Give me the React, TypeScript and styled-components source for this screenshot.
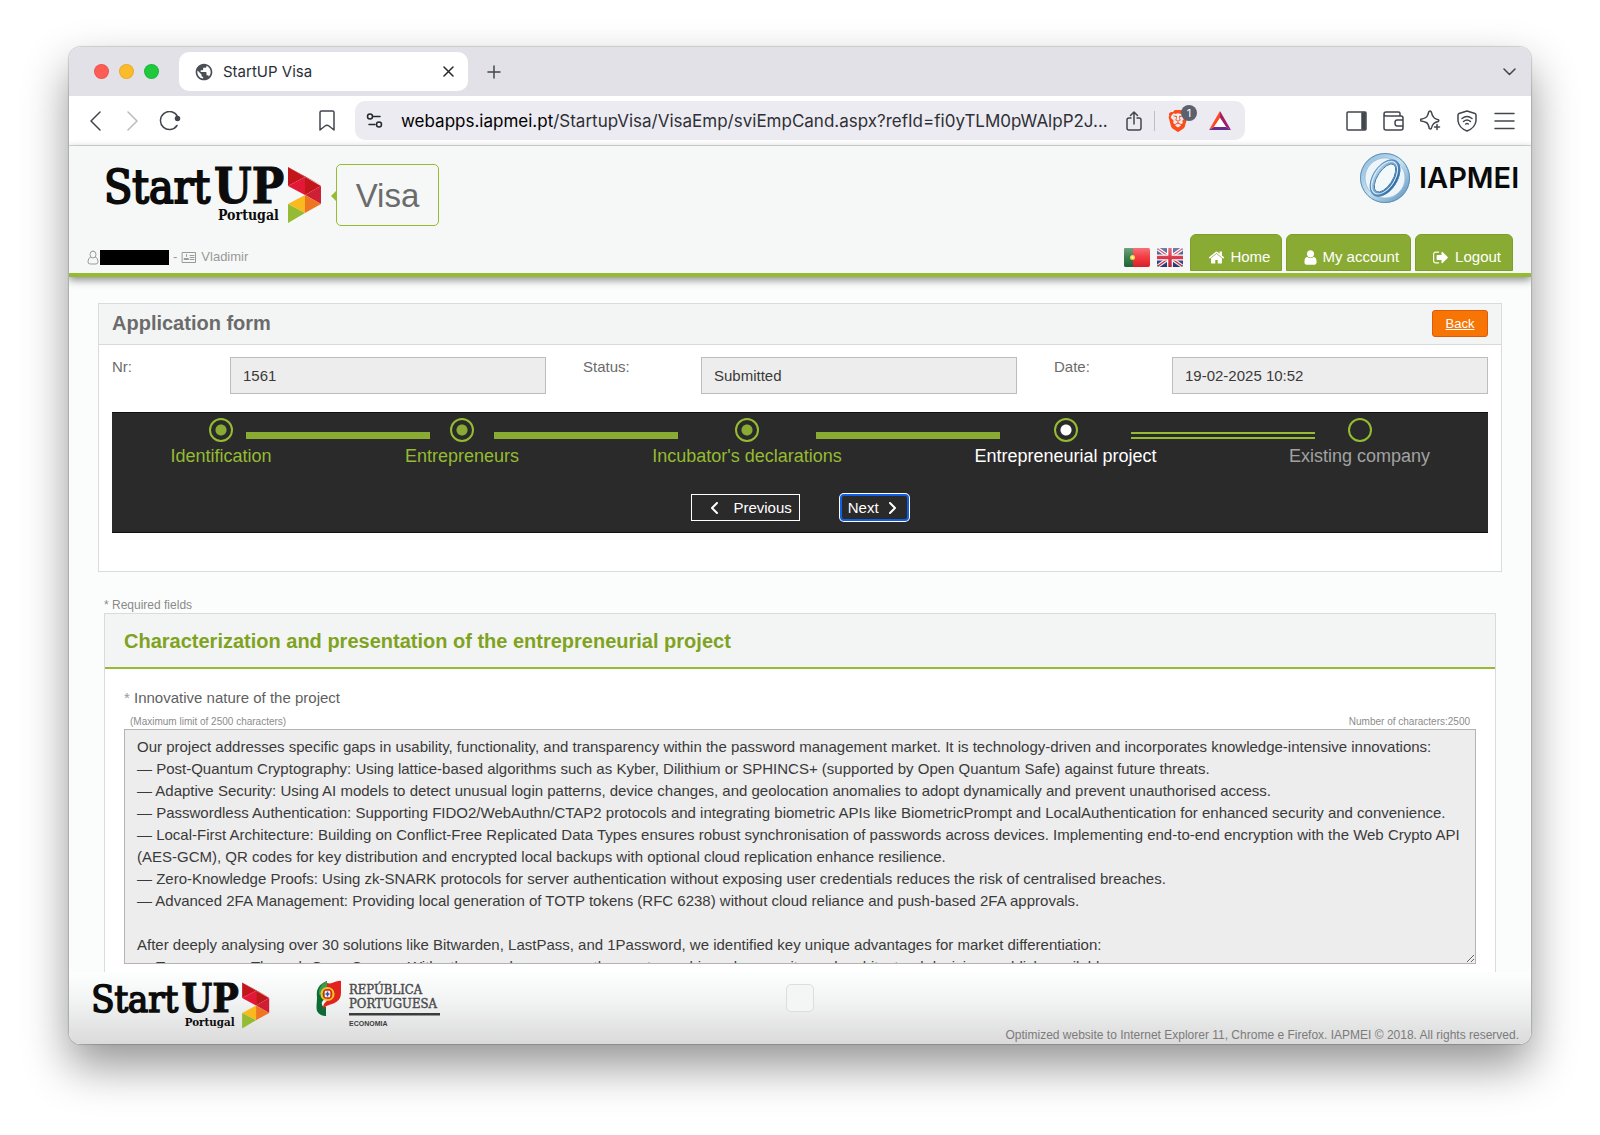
import React from 'react';
import styled, { createGlobalStyle } from 'styled-components';
import { MdPublic } from 'react-icons/md';
import { SiBrave } from 'react-icons/si';

const sans = '"Liberation Sans", Arial, sans-serif';
const ui = 'Inter, Roboto, sans-serif';
const slab = '"DejaVu Serif Condensed", "DejaVu Serif", serif';

const green = '#95bb32';
const leaf = '#8aab33';
const chromeInk = '#42464d';

const GlobalStyle = createGlobalStyle`
  *, *::before, *::after { box-sizing: border-box; }
  body { margin: 0; background: #fff; font-family: ${sans}; }
  button, input, textarea { font: inherit; }
`;

/* ---------- window ---------- */

const Desktop = styled.div`
  height: 100vh;
  padding: 47px 69px 91px;
  display: flex;
`;

const Window = styled.div`
  flex: 1;
  min-width: 0;
  display: flex;
  flex-direction: column;
  overflow: hidden;
  border-radius: 12px;
  background: #fff;
  box-shadow: 0 0 1px 1px rgba(0, 0, 0, 0.16), 0 22px 46px rgba(0, 0, 0, 0.42);
`;

const TabStrip = styled.div`
  height: 49px;
  flex: none;
  display: flex;
  align-items: center;
  padding: 0 15px 0 25px;
  background: #e2e1e7;
`;

const Lights = styled.div`
  display: flex;
  gap: 10px;
  margin-right: 20px;
`;

const Light = styled.span<{ $color: string }>`
  width: 15px;
  height: 15px;
  border-radius: 50%;
  background: ${(p) => p.$color};
  box-shadow: inset 0 0 0 1px rgba(0, 0, 0, 0.08);
`;

const Tab = styled.div`
  width: 289px;
  height: 39px;
  display: flex;
  align-items: center;
  padding: 0 6px 0 15px;
  border-radius: 10px;
  background: #fff;
  color: #2b2f36;
  font: 15px/20px ${ui};
  margin-right: 12px;
`;

const TabTitle = styled.span`
  flex: 1;
  margin-left: 9px;
`;

const IconButton = styled.button<{ $w?: number }>`
  width: ${(p) => p.$w ?? 28}px;
  height: 28px;
  flex: none;
  display: flex;
  align-items: center;
  justify-content: center;
  padding: 0;
  border: 0;
  background: none;
  color: ${chromeInk};
`;

const Spacer = styled.span`
  flex: 1;
`;

const Toolbar = styled.div`
  height: 50px;
  flex: none;
  display: flex;
  align-items: center;
  padding: 0 9px;
  border-bottom: 1px solid #d9dbdf;
  background: #fff;
`;

const NavButtons = styled.div`
  display: flex;
  margin-right: 123px;
`;

const AddressBar = styled.div`
  flex: 0 1 890px;
  min-width: 0;
  height: 39px;
  display: flex;
  align-items: center;
  margin-left: 14px;
  padding: 0 9px 0 5px;
  border-radius: 10px;
  background: #ecebf1;
`;

const Address = styled.div`
  flex: 1;
  min-width: 0;
  margin-left: 13px;
  overflow: hidden;
  white-space: nowrap;
  color: #2e3035;
  font: 17px/24px ${ui};
  b { font-weight: 400; color: #000; }
`;

const Divider = styled.span`
  width: 1px;
  height: 20px;
  margin: 0 8px 0 6px;
  background: #bdbdc4;
`;

const Shield = styled.span`
  position: relative;
  display: flex;
  padding: 0 15px 0 4px;
  color: #fb4d1a;
`;

const Badge = styled.span`
  position: absolute;
  top: -5px;
  right: 7px;
  width: 16px;
  height: 16px;
  border-radius: 8px;
  background: #5d606d;
  color: #fff;
  font: 11px/16px ${ui};
  text-align: center;
`;

const Tools = styled.div`
  display: flex;
  gap: 1px;
`;

/* ---------- page ---------- */

const Page = styled.div`
  flex: 1;
  min-height: 0;
  display: flex;
  flex-direction: column;
  background: #fbfdfc;
`;

const SiteHeader = styled.header`
  position: relative;
  z-index: 1;
  flex: none;
  height: 131px;
  display: flex;
  justify-content: space-between;
  border-bottom: 4px solid ${green};
  background: #f6f8f7;
  box-shadow: 0 3px 8px rgba(0, 0, 0, 0.45);
`;

const BrandSide = styled.div`
  display: flex;
  flex-direction: column;
  padding: 18px 0 0 18px;
`;

const Brand = styled.div`
  display: flex;
  gap: 14px;
  padding-left: 18px;
`;

const VisaTag = styled.div`
  position: relative;
  width: 103px;
  height: 62px;
  border: 1px solid ${green};
  border-radius: 5px;
  color: #6b6b6b;
  font-size: 33px;
  line-height: 62px;
  text-align: center;
  &::before {
    content: '';
    position: absolute;
    left: -6px;
    top: 25px;
    border: 6px solid transparent;
    border-left: 0;
    border-right-color: ${green};
  }
`;

const UserLine = styled.div`
  display: flex;
  align-items: center;
  gap: 4px;
  margin-top: 22px;
  color: #999;
  font-size: 13px;
  line-height: 18px;
`;

const Redacted = styled.span`
  width: 69px;
  height: 15px;
  margin-left: -3px;
  background: #000;
`;

const HeaderSide = styled.div`
  display: flex;
  flex-direction: column;
  align-items: flex-end;
  justify-content: space-between;
  padding: 6px 10px 2px 0;
`;

const SiteNav = styled.nav`
  display: flex;
  align-items: flex-end;
  gap: 4px;
  padding-right: 8px;
`;

const Flag = styled.a`
  display: flex;
  margin: 0 3px 4px 0;
`;

const NavTab = styled.a`
  height: 37px;
  display: flex;
  align-items: center;
  gap: 5px;
  padding: 9px 11px 0 17px;
  border: 1px solid #7d9e28;
  border-radius: 6px 6px 0 0;
  background: ${leaf};
  color: #fff;
  font-size: 15px;
  line-height: 18px;
  text-decoration: none;
`;

const Scroll = styled.main`
  flex: 1;
  min-height: 0;
  overflow: auto;
  scrollbar-width: none;
  padding: 26px 29px 0;
`;

const Panel = styled.section<{ $inset?: boolean }>`
  margin: 0 ${(p) => (p.$inset ? 6 : 0)}px;
  border: 1px solid #dadcdb;
  background: #fff;
`;

const PanelHead = styled.div`
  height: 41px;
  display: flex;
  align-items: center;
  justify-content: space-between;
  padding: 0 13px 2px;
  border-bottom: 1px solid #d8dad9;
  background: #f3f5f4;
`;

const PanelTitle = styled.h1`
  margin: 0;
  color: #6b6b6b;
  font-size: 20px;
  line-height: 24px;
`;

const BackLink = styled.a`
  width: 56px;
  height: 27px;
  border: 1px solid #dd5a0c;
  border-radius: 3px;
  background: #f67504;
  color: #fff;
  font-size: 13px;
  line-height: 25px;
  text-align: center;
`;

const PanelBody = styled.div`
  padding: 12px 13px 38px;
`;

const Fields = styled.div`
  display: grid;
  grid-template-columns: repeat(3, 1fr);
  gap: 37px;
`;

const Field = styled.div`
  display: grid;
  grid-template-columns: 118px 1fr;
  label {
    color: #6b6b6b;
    font-size: 15px;
    line-height: 20px;
  }
  input {
    width: 100%;
    min-width: 0;
    height: 37px;
    padding: 0 12px 1px;
    border: 1px solid #bdbdbd;
    border-radius: 0;
    background: #ededed;
    color: #3a3a3a;
    font-size: 15px;
  }
`;

const Wizard = styled.div`
  height: 121px;
  display: flex;
  flex-direction: column;
  justify-content: space-between;
  margin-top: 18px;
  padding: 5px 84px 11px;
  border: solid #111;
  border-width: 1px 0;
  background: #2a2a2a;
`;

const Steps = styled.ol`
  display: flex;
  margin: 0;
  padding: 0;
  list-style: none;
`;

const Step = styled.li<{ $w: number; $color: string }>`
  width: ${(p) => p.$w}px;
  flex: none;
  display: flex;
  flex-direction: column;
  align-items: center;
  gap: 3px;
  color: ${(p) => p.$color};
  font-size: 18px;
  line-height: 22px;
  white-space: nowrap;
`;

const Dot = styled.span<{ $fill: string }>`
  width: 24px;
  height: 24px;
  border: 2px solid ${green};
  border-radius: 50%;
  background: radial-gradient(circle, ${(p) => p.$fill} 5px, transparent 6px);
`;

const Line = styled.li<{ $open?: boolean }>`
  flex: 1;
  height: 7px;
  margin-top: 14px;
  border: solid ${(p) => (p.$open ? green : leaf)};
  border-width: 2px 0;
  background: ${(p) => (p.$open ? 'transparent' : leaf)};
`;

const WizardButtons = styled.div`
  display: flex;
  justify-content: center;
  gap: 40px;
`;

const WizardButton = styled.button<{ $active?: boolean }>`
  height: 27px;
  display: flex;
  align-items: center;
  gap: ${(p) => (p.$active ? 7 : 10)}px;
  padding: ${(p) => (p.$active ? '0 9px 0 6px' : '0 7px 0 15px')};
  border: ${(p) => (p.$active ? '2px solid #0f5fe0' : '1px solid #fff')};
  border-radius: ${(p) => (p.$active ? 4 : 0)}px;
  box-shadow: ${(p) => (p.$active ? '0 0 0 1px #fff' : 'none')};
  background: #2a2a2a;
  color: #fff;
  font-size: 15px;
  line-height: 20px;
`;

const Required = styled.p`
  margin: 26px 6px 1px;
  color: #8a8a8a;
  font-size: 12px;
  line-height: 14px;
`;

const SectionTitle = styled.h2`
  margin: 0;
  padding: 15px 19px 13px;
  border-bottom: 2px solid ${green};
  background: #f3f5f4;
  color: #7fa31f;
  font-size: 20px;
  line-height: 25px;
`;

const SectionBody = styled.div`
  padding: 18px 19px 60px;
`;

const QuestionLabel = styled.label`
  display: block;
  color: #5f5f5f;
  font-size: 15px;
  line-height: 22px;
  span { color: #999; }
`;

const Hints = styled.div`
  display: flex;
  justify-content: space-between;
  margin-top: 7px;
  padding: 0 6px 1px;
  color: #8c8c8c;
  font-size: 10px;
  line-height: 12px;
`;

const Answer = styled.textarea`
  display: block;
  width: 100%;
  height: 235px;
  padding: 6px 8px 6px 12px;
  border: 1px solid #b4b4b4;
  border-radius: 0;
  background: #ededed;
  color: #3a3a3a;
  font-size: 15px;
  line-height: 22px;
  resize: vertical;
  overflow: hidden;
`;

const SiteFooter = styled.footer`
  flex: none;
  height: 72px;
  display: grid;
  grid-template-columns: 1fr auto 1fr;
  padding: 8px 12px 0;
  background: linear-gradient(#fdfefe, #f2f3f3 40%, #dadada);
`;

const FooterLogos = styled.div`
  display: flex;
  align-items: flex-start;
  gap: 46px;
  padding-left: 11px;
`;

const FooterButton = styled.button`
  width: 28px;
  height: 28px;
  margin-top: 4px;
  border: 1px solid #dcdedd;
  border-radius: 5px;
  background: #f3f6f5;
`;

const Legal = styled.p`
  align-self: end;
  justify-self: end;
  margin: 0 0 2px;
  color: #7b7b7b;
  font-size: 12px;
  line-height: 14px;
  white-space: nowrap;
`;

/* ---------- drawings ---------- */

const StartupLogo = ({ width, height }: { width: number; height: number }) => (
  <svg width={width} height={height} viewBox="0 0 217 62" overflow="visible" role="img" aria-label="StartUP Portugal">
    <g fill="#0c0c0c" fontFamily={slab}>
      <text x="-1" y="39" fontSize="46" stroke="#0c0c0c" strokeWidth="2">Start</text>
      <text x="109" y="39" fontSize="48" fontWeight="700" stroke="#0c0c0c">UP</text>
      <text x="113" y="56" fontSize="14" fontWeight="700">Portugal</text>
    </g>
    <path fill="#c3161c" d="M183 3l17 10-17 9z" />
    <path fill="#b3141a" d="M183 3l33 18-16-8z" />
    <path fill="#e31837" d="M183 22l17-9v18z" />
    <path fill="#c3161c" d="M200 13l16 9-16 9z" />
    <path fill="#cf1f35" d="M216 22v18l-16-9z" />
    <path fill="#f9b91f" d="M200 31v18l-17-9z" />
    <path fill="#ee7623" d="M200 31l16 9-16 9z" />
    <path fill="#95bb32" d="M183 40l17 9-17 10z" />
  </svg>
);

const IapmeiLogo = () => (
  <svg width="162" height="52" viewBox="0 0 162 52" role="img" aria-label="IAPMEI">
    <defs>
      <linearGradient id="ring" x1="0" y1="0" x2="1" y2="1">
        <stop offset="0" stopColor="#8fbbdc" />
        <stop offset="0.5" stopColor="#c6e0f2" />
        <stop offset="1" stopColor="#5f93bd" />
      </linearGradient>
      <linearGradient id="inner" x1="0" y1="0" x2="1" y2="0">
        <stop offset="0" stopColor="#a9cde8" />
        <stop offset="1" stopColor="#2f6ea5" />
      </linearGradient>
    </defs>
    <circle cx="26" cy="26" r="22.500" fill="#edf5fa" stroke="url(#ring)" strokeWidth="5" />
    <circle cx="26" cy="26" r="24.500" fill="none" stroke="#5f90b6" />
    <circle cx="26" cy="26" r="20" fill="none" stroke="#8fb6d3" strokeWidth="0.700" />
    <g transform="rotate(33 26 26)">
      <ellipse cx="26" cy="26" rx="10" ry="18.500" fill="none" stroke="url(#inner)" strokeWidth="4.500" />
      <ellipse cx="26" cy="26" rx="12" ry="20" fill="none" stroke="#4a81b0" strokeWidth="0.800" />
      <ellipse cx="26" cy="26" rx="7.500" ry="16" fill="#f3f8fb" stroke="#3f78a8" strokeWidth="0.900" />
      <ellipse cx="25.500" cy="26" rx="10" ry="18.200" fill="none" stroke="#dfeefa" strokeWidth="1" />
    </g>
    <text x="60" y="36" fill="#0a0a0a" fontFamily={ui} fontSize="29" fontWeight="600">IAPMEI</text>
  </svg>
);

const RepublicLogo = () => (
  <svg width="132" height="50" viewBox="0 0 132 50" role="img" aria-label="República Portuguesa Economia">
    <path fill="#0a6b36" d="M11 1C3 4 0 9 1 17c0 6-1 9 0 14 2 4 6 5 9 5v-9c-3 0-5-2-4-5 2-3 5-5 5-9z" />
    <path fill="#3b9b4b" d="M11 1C5 4 2 9 3 15l8-4z" />
    <path fill="#e2241f" d="M11 3c5 2 9-3 14-2v12c0 8-6 10-12 12-3 1-5 2-5 5-2-4 0-7 3-9z" />
    <circle cx="11.500" cy="14" r="6" fill="none" stroke="#f2c61f" strokeWidth="2.200" />
    <rect x="8" y="10" width="7" height="8" rx="2" fill="#fff" stroke="#e2241f" strokeWidth="1.400" />
    <path stroke="#2b5a9b" strokeWidth="1.600" d="M11.500 11.500v5M9.500 14h4" />
    <g fill="#4a4a4c" stroke="#4a4a4c" strokeWidth="0.400" fontFamily={slab}>
      <text x="33" y="14" fontSize="13">REPÚBLICA</text>
      <text x="33" y="28" fontSize="13">PORTUGUESA</text>
    </g>
    <path fill="#3c3c3e" d="M33 33h91v2.500H33z" />
    <text x="33" y="46" fill="#3c3c3e" fontFamily={sans} fontSize="7" fontWeight="700">ECONOMIA</text>
  </svg>
);

const PortugalFlag = () => (
  <svg width="26" height="19" viewBox="0 0 26 19" role="img" aria-label="Português">
    <defs>
      <linearGradient id="gloss" x1="0" y1="0" x2="0" y2="1">
        <stop offset="0" stopColor="#fff" stopOpacity="0.35" />
        <stop offset="0.5" stopColor="#fff" stopOpacity="0.1" />
        <stop offset="1" stopColor="#000" stopOpacity="0.12" />
      </linearGradient>
    </defs>
    <rect width="26" height="19" rx="2" fill="#f2232d" />
    <path fill="#24713b" d="M2 0h7v19H2a2 2 0 0 1-2-2V2a2 2 0 0 1 2-2z" />
    <circle cx="8.500" cy="9.500" r="2.500" fill="#f5d32a" />
    <circle cx="8.500" cy="9.500" r="1" fill="#fff" />
    <rect width="26" height="19" rx="2" fill="url(#gloss)" />
  </svg>
);

const BritainFlag = () => (
  <svg width="26" height="19" viewBox="0 0 26 19" role="img" aria-label="English">
    <rect width="26" height="19" rx="2" fill="#2a3c85" />
    <path stroke="#fff" strokeWidth="3.600" d="M1 1l24 17M25 1L1 18" />
    <path stroke="#d62a3c" strokeWidth="1.300" d="M1 1l24 17M25 1L1 18" />
    <path stroke="#fff" strokeWidth="6" d="M13 0v19M0 9.500h26" />
    <path stroke="#d6243a" strokeWidth="3.400" d="M13 0v19M0 9.500h26" />
    <rect width="26" height="19" rx="2" fill="url(#gloss)" />
  </svg>
);

type StrokeProps = {
  w: number;
  h: number;
  d: string;
  color?: string;
  sw?: number;
  children?: React.ReactNode;
};

const Stroke = ({ w, h, d, color = 'currentColor', sw = 1.5, children }: StrokeProps) => (
  <svg width={w} height={h} viewBox={`0 0 ${w} ${h}`} fill="none" stroke={color} strokeWidth={sw} strokeLinecap="round" strokeLinejoin="round" aria-hidden="true">
    <path d={d} />
    {children}
  </svg>
);

const Glyph = ({ d, w = 17, box = '0 0 1792 1792' }: { d: string; w?: number; box?: string }) => (
  <svg width={w} height={17} viewBox={box} fill="currentColor" aria-hidden="true">
    <path d={d} />
  </svg>
);

const homePath =
  'M1472 992v480q0 26-19 45t-45 19h-384v-384h-256v384h-384q-26 0-45-19t-19-45v-480q0-1 .5-3t.5-3l575-474 575 474q1 2 1 6zm223-69l-62 74q-8 9-21 11h-3q-13 0-21-7l-692-577-692 577q-12 8-24 7-13-2-21-11l-62-74q-8-10-7-23.500t11-21.500l719-599q32-26 76-26t76 26l244 204v-195q0-14 9-23t23-9h192q14 0 23 9t9 23v408l219 182q10 8 11 21.500t-7 23.500z';
const userPath =
  'M1536 1399q0 109-62.500 187t-150.500 78h-854q-88 0-150.500-78t-62.500-187q0-85 8.500-160.500t31.500-152 58.500-131 94-89 134.500-34.500q131 128 313 128t313-128q76 0 134.500 34.500t94 89 58.500 131 31.500 152 8.500 160.500zm-256-887q0 159-112.500 271.500t-271.500 112.500-271.500-112.500-112.500-271.500 112.500-271.500 271.500-112.500 271.500 112.500 112.500 271.500z';
const logoutPath =
  'M640 1440q0 4 1 20t.5 26.500-3 23.500-10 19.500-20.500 6.500h-320q-119 0-203.500-84.500t-84.500-203.500v-704q0-119 84.500-203.500t203.500-84.500h320q13 0 22.500 9.500t9.500 22.500q0 4 1 20t.5 26.500-3 23.500-10 19.500-20.500 6.500h-320q-66 0-113 47t-47 113v704q0 66 47 113t113 47h312l11.500 1 11.500 3 8 5.500 7 9 2 13.500zm928-544q0 26-19 45l-544 544q-19 19-45 19t-45-19-19-45v-288h-448q-26 0-45-19t-19-45v-384q0-26 19-45t45-19h448v-288q0-26 19-45t45-19 45 19l544 544q19 19 19 45z';

/* ---------- data ---------- */

const fields = [
  { id: 'nr', label: 'Nr:', value: '1561' },
  { id: 'status', label: 'Status:', value: 'Submitted' },
  { id: 'date', label: 'Date:', value: '19-02-2025 10:52' },
];

const steps = [
  { label: 'Identification', width: 50, color: green, fill: leaf },
  { label: 'Entrepreneurs', width: 64, color: green, fill: leaf },
  { label: "Incubator's declarations", width: 138, color: green, fill: leaf },
  { label: 'Entrepreneurial project', width: 131, color: '#fff', fill: '#fff' },
  { label: 'Existing company', width: 89, color: '#a2a2a2', fill: 'transparent' },
];

const answer = `Our project addresses specific gaps in usability, functionality, and transparency within the password management market. It is technology-driven and incorporates knowledge-intensive innovations:
— Post-Quantum Cryptography: Using lattice-based algorithms such as Kyber, Dilithium or SPHINCS+ (supported by Open Quantum Safe) against future threats.
— Adaptive Security: Using AI models to detect unusual login patterns, device changes, and geolocation anomalies to adopt dynamically and prevent unauthorised access.
— Passwordless Authentication: Supporting FIDO2/WebAuthn/CTAP2 protocols and integrating biometric APIs like BiometricPrompt and LocalAuthentication for enhanced security and convenience.
— Local-First Architecture: Building on Conflict-Free Replicated Data Types ensures robust synchronisation of passwords across devices. Implementing end-to-end encryption with the Web Crypto API (AES-GCM), QR codes for key distribution and encrypted local backups with optional cloud replication enhance resilience.
— Zero-Knowledge Proofs: Using zk-SNARK protocols for server authentication without exposing user credentials reduces the risk of centralised breaches.
— Advanced 2FA Management: Providing local generation of TOTP tokens (RFC 6238) without cloud reliance and push-based 2FA approvals.

After deeply analysing over 30 solutions like Bitwarden, LastPass, and 1Password, we identified key unique advantages for market differentiation:
— Transparency Through Open Source: With other vendors, we see the cryptographic code, security, and architectural decisions publicly available.`;

/* ---------- app ---------- */

export default function App() {
  return (
    <Desktop>
      <GlobalStyle />
      <Window>
        <TabStrip>
          <Lights>
            <Light $color="#fe5d56" />
            <Light $color="#fcbb2b" />
            <Light $color="#1fc83c" />
          </Lights>
          <Tab>
            <MdPublic size={20} color="#4a4e55" />
            <TabTitle>StartUP Visa</TabTitle>
            <IconButton aria-label="Close tab">
              <Stroke w={11} h={11} d="M1 1l9 9M10 1l-9 9" color="#25282d" />
            </IconButton>
          </Tab>
          <IconButton aria-label="New tab">
            <Stroke w={14} h={14} d="M7 1v12M1 7h12" />
          </IconButton>
          <Spacer />
          <IconButton $w={14} aria-label="Search tabs">
            <Stroke w={13} h={8} d="M1 1l5.500 5.500L12 1" />
          </IconButton>
        </TabStrip>

        <Toolbar>
          <NavButtons>
            <IconButton $w={36} aria-label="Back">
              <Stroke w={12} h={20} d="M10 1L1 10l9 9" />
            </IconButton>
            <IconButton $w={36} aria-label="Forward">
              <Stroke w={12} h={20} d="M2 1l9 9-9 9" color="#b9bbbf" />
            </IconButton>
            <IconButton $w={40} aria-label="Reload">
              <Stroke w={22} h={20} d="M18.500 5.500A9 9 0 1 0 18 14.500">
                <circle cx="18.500" cy="7.500" r="2" fill="currentColor" />
              </Stroke>
            </IconButton>
          </NavButtons>
          <IconButton aria-label="Bookmark">
            <Stroke w={16} h={21} d="M1 2.500Q1 1 2.500 1h11Q15 1 15 2.500V20l-5-4q-2-1.500-4 0l-5 4z" />
          </IconButton>
          <AddressBar>
            <IconButton aria-label="Site settings">
              <Stroke w={17} h={15} d="M7 3.500h7M3 11.500h6" color="#25282d">
                <circle cx="4" cy="3.500" r="2.500" />
                <circle cx="13" cy="11.500" r="2.500" />
              </Stroke>
            </IconButton>
            <Address>
              <b>webapps.iapmei.pt</b>/StartupVisa/VisaEmp/sviEmpCand.aspx?refId=fi0yTLM0pWAlpP2J...
            </Address>
            <IconButton aria-label="Share">
              <Stroke w={16} h={20} d="M5 7H3Q1 7 1 9v8q0 2 2 2h10q2 0 2-2V9q0-2-2-2h-2M8 13V1M4.500 4.500L8 1l3.500 3.500" />
            </IconButton>
            <Divider />
            <Shield>
              <SiBrave size={22} />
              <Badge>1</Badge>
            </Shield>
            <IconButton $w={32} aria-label="Rewards">
              <svg width="22" height="20" viewBox="0 0 22 20" aria-hidden="true">
                <path fill="#ff4724" d="M11 0v7L5 16l-5 3z" />
                <path fill="#9e1f63" d="M11 0l11 19-5-3-6-9z" />
                <path fill="#662d91" d="M0 19l5-3h12l5 3z" />
                <path fill="#fff" d="M11 7l6 9H5z" />
              </svg>
            </IconButton>
          </AddressBar>
          <Spacer />
          <Tools>
            <IconButton $w={36} aria-label="Sidebar">
              <Stroke w={21} h={20} d="M2 1h17q1 0 1 1v16q0 1-1 1H2q-1 0-1-1V2q0-1 1-1z">
                <path fill="currentColor" d="M16 2h3v16h-3z" />
              </Stroke>
            </IconButton>
            <IconButton $w={36} aria-label="Wallet">
              <Stroke w={21} h={20} d="M17 4V2.500Q17 1 15.500 1H3Q1 1 1 3v14q0 2 2 2h15q2 0 2-2V7q0-2-2-2H3Q1 5 1 3M20 9h-6q-2 0-2 3t2 3h6" />
            </IconButton>
            <IconButton $w={36} aria-label="Assistant">
              <Stroke w={21} h={21} d="M10 1q1 0 1.300 1 1 4.500 3 6t4 1.700q1 .8 0 1.800-3 .5-4.500 2-2 2-2.500 5-.8 1-2 0-1-5-3-6T1 11q-1-1 0-1.800 4-.8 5.500-2.200 1.500-1.500 2.200-5Q9 1 10 1z">
                <path d="M17 14.500v5M14.500 17h5" />
              </Stroke>
            </IconButton>
            <IconButton $w={36} aria-label="VPN">
              <Stroke w={20} h={22} d="M10 1l8 2.500q1 .5 1 1.500v6q-1 7-9 10-8-3-9-10V5q0-1 1-1.500zM5 8.500q5-4 10 0M6.500 11.500q3.500-3 7 0">
                <path d="M8.700 14q1.300-1 2.600 0" />
              </Stroke>
            </IconButton>
            <IconButton $w={36} aria-label="Menu">
              <Stroke w={21} h={18} d="M1 1.500h19M1 9h19M1 16.500h19" />
            </IconButton>
          </Tools>
        </Toolbar>

        <Page>
          <SiteHeader>
            <BrandSide>
              <Brand>
                <StartupLogo width={217} height={62} />
                <VisaTag>Visa</VisaTag>
              </Brand>
              <UserLine>
                <Stroke w={12} h={15} sw={1} d="M6 1a3 3.500 0 0 1 0 7 3 3.500 0 0 1 0-7M3.500 7Q1 8 1 11.500 1 14 3 14h6q2 0 2-2.500Q11 8 8.500 7" />
                <Redacted />
                <span>-</span>
                <Stroke w={16} h={13} sw={1} d="M1.500 1.500h13v10h-13zM9 4.500h4M9 6.500h4M9 8.500h4">
                  <path fill="currentColor" d="M5.500 3.500v2M3.500 8.500h4v-1h-4z" />
                </Stroke>
                <span>Vladimir</span>
              </UserLine>
            </BrandSide>
            <HeaderSide>
              <IapmeiLogo />
              <SiteNav>
                <Flag href="#pt"><PortugalFlag /></Flag>
                <Flag href="#en"><BritainFlag /></Flag>
                <NavTab href="#home"><Glyph d={homePath} />Home</NavTab>
                <NavTab href="#account"><Glyph d={userPath} w={13} box="256 0 1280 1792" />My account</NavTab>
                <NavTab href="#logout"><Glyph d={logoutPath} />Logout</NavTab>
              </SiteNav>
            </HeaderSide>
          </SiteHeader>

          <Scroll>
            <Panel>
              <PanelHead>
                <PanelTitle>Application form</PanelTitle>
                <BackLink href="#back">Back</BackLink>
              </PanelHead>
              <PanelBody>
                <Fields>
                  {fields.map((f) => (
                    <Field key={f.id}>
                      <label htmlFor={f.id}>{f.label}</label>
                      <input id={f.id} defaultValue={f.value} readOnly />
                    </Field>
                  ))}
                </Fields>
                <Wizard>
                  <Steps>
                    {steps.map((s, i) => (
                      <React.Fragment key={s.label}>
                        {i > 0 && <Line $open={i === steps.length - 1} aria-hidden="true" />}
                        <Step $w={s.width} $color={s.color}>
                          <Dot $fill={s.fill} />
                          <span>{s.label}</span>
                        </Step>
                      </React.Fragment>
                    ))}
                  </Steps>
                  <WizardButtons>
                    <WizardButton>
                      <Stroke w={16} h={12} sw={2} d="M10 1L5 6l5 5" />
                      Previous
                    </WizardButton>
                    <WizardButton $active>
                      Next
                      <Stroke w={12} h={12} sw={2} d="M4 1l5 5-5 5" />
                    </WizardButton>
                  </WizardButtons>
                </Wizard>
              </PanelBody>
            </Panel>

            <Required>* Required fields</Required>
            <Panel $inset>
              <SectionTitle>Characterization and presentation of the entrepreneurial project</SectionTitle>
              <SectionBody>
                <QuestionLabel htmlFor="innovation">
                  <span>*</span> Innovative nature of the project
                </QuestionLabel>
                <Hints>
                  <span>(Maximum limit of 2500 characters)</span>
                  <span>Number of characters:2500</span>
                </Hints>
                <Answer id="innovation" defaultValue={answer} readOnly />
              </SectionBody>
            </Panel>
          </Scroll>

          <SiteFooter>
            <FooterLogos>
              <StartupLogo width={178} height={51} />
              <RepublicLogo />
            </FooterLogos>
            <FooterButton aria-label="Back to top" />
            <Legal>Optimized website to Internet Explorer 11, Chrome e Firefox. IAPMEI © 2018. All rights reserved.</Legal>
          </SiteFooter>
        </Page>
      </Window>
    </Desktop>
  );
}
